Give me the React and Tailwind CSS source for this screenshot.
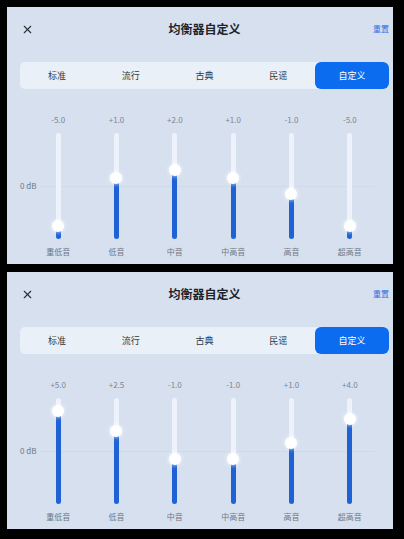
import React from 'react';
import { X } from 'lucide-react';

const FONT = { fontFamily: '"Noto Sans CJK SC", "Noto Sans", sans-serif' };

const TABS = ['标准', '流行', '古典', '民谣', '自定义'];
const BANDS = ['重低音', '低音', '中音', '中高音', '高音', '超高音'];

const TRACK_H = 106;
const PX_PER_DB = 8;

// formats +1.0 / -5.0 / +2.5
const fmt = (v) => (v > 0 ? '+' : '') + (Number.isInteger(v) ? v.toFixed(1) : String(v));

function Band({ name, value }) {
  const thumbY = TRACK_H / 2 - value * PX_PER_DB;
  return (
    <div className="flex flex-col items-center">
      <div className="h-[10px] text-[8px] leading-[10px] text-[#7d8591]">{fmt(value)}</div>
      <div className="relative mt-[8px] h-[106px] w-[5px] rounded-full bg-[#eef3fb]">
        <div
          className="absolute bottom-0 left-0 w-[5px] rounded-b-full bg-[#1f62d6]"
          style={{ height: TRACK_H - thumbY }}
        />
        <div
          className="absolute left-1/2 h-[12px] w-[12px] -translate-x-1/2 -translate-y-1/2 rounded-full bg-white shadow-[0_0_4px_rgba(255,255,255,0.9)]"
          style={{ top: thumbY }}
        />
      </div>
      <div className="mt-[8px] h-[10px] text-[8px] leading-[10px] text-[#6f7782]">{name}</div>
    </div>
  );
}

function EqualizerPanel({ values }) {
  return (
    <div className="w-[386px] h-[257px] bg-[#d6e0ef] pl-[13px] pr-[4px] pt-[13px]" style={FONT}>
      {/* header */}
      <div className="relative flex h-[18px] items-center justify-center">
        <X className="absolute left-[1px] text-[#2a2e35]" size={13} strokeWidth={2} />
        <span className="text-[12px] font-semibold text-[#1f2329]">均衡器自定义</span>
        <span className="absolute right-0 text-[8px] text-[#2f6fe0]">重置</span>
      </div>

      {/* presets */}
      <div className="mt-[24px] grid h-[27px] grid-cols-5 rounded-[5px] bg-[#eaf0f8]">
        {TABS.map((t, i) => (
          <div
            key={t}
            className={
              i === TABS.length - 1
                ? 'flex items-center justify-center rounded-[6px] bg-[#0b6cf0] text-[9px] text-white'
                : 'flex items-center justify-center text-[9px] text-[#33373d]'
            }
          >
            {t}
          </div>
        ))}
      </div>

      {/* sliders */}
      <div className="relative mt-[26px] ml-[9px] mr-[10px]">
        <div className="absolute left-[11px] right-[4px] top-[71px] h-px bg-[#cfd9e8]" />
        <div className="absolute left-[-9px] top-[66px] text-[8px] leading-[10px] text-[#6f7782]">0 dB</div>
        <div className="relative grid grid-cols-6">
          {BANDS.map((b, i) => (
            <Band key={b} name={b} value={values[i]} />
          ))}
        </div>
      </div>
    </div>
  );
}

export default function App() {
  return (
    <div className="flex h-[539px] w-[404px] flex-col gap-[8px] bg-black pl-[7px] pt-[7px]">
      <EqualizerPanel values={[-5, 1, 2, 1, -1, -5]} />
      <EqualizerPanel values={[5, 2.5, -1, -1, 1, 4]} />
    </div>
  );
}
